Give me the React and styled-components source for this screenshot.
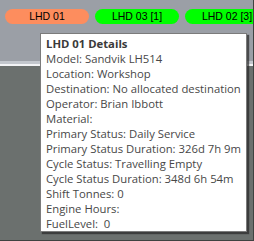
import React from 'react';
import styled, { createGlobalStyle } from 'styled-components';

const GlobalStyle = createGlobalStyle`
  html, body {
    margin: 0;
    padding: 0;
    background: #6b706e;
  }
`;

const Frame = styled.div`
  position: relative;
  width: 254px;
  height: 241px;
  box-sizing: border-box;
  border-right: 1px solid #3f4241;
  border-bottom: 1px solid #3f4241;
  background: #6b706e;
  overflow: hidden;
  display: flex;
  flex-direction: column;
`;

const TopBand = styled.div`
  height: 64px;
  background: #9b9fa6;
  padding: 9px 0 0 5px;
  box-sizing: border-box;
  border-bottom: 3px solid #c3c7cd;
`;

const WhiteLine = styled.div`
  height: 2px;
  background: #f2f3f5;
`;

const PillRow = styled.div`
  display: flex;
  gap: 6px;
  white-space: nowrap;
`;

const Pill = styled.div`
  flex: none;
  width: 84px;
  height: 15px;
  border-radius: 8px;
  background: ${p => p.$color};
  font-family: "Liberation Sans", Arial, sans-serif;
  font-size: 10.5px;
  line-height: 15px;
  text-align: center;
  color: #000;
`;

const Tooltip = styled.div`
  position: absolute;
  left: 40px;
  top: 33px;
  width: 207px;
  height: 199px;
  box-sizing: border-box;
  background: #fff;
  border: 1px solid #7b7b7b;
  box-shadow: 2px 2px 1px rgba(40, 40, 40, 0.7);
  padding: 2px 0 0 5px;
  font-family: "Open Sans", "Noto Sans", sans-serif;
  font-size: 11.3px;
  line-height: 15px;
  color: #474747;
  white-space: nowrap;
`;

const Title = styled.div`
  font-weight: bold;
  color: #3a3a3a;
`;

const Line = styled.div``;

const details = [
  'Model: Sandvik LH514',
  'Location: Workshop',
  'Destination: No allocated destination',
  'Operator: Brian Ibbott',
  'Material:',
  'Primary Status: Daily Service',
  'Primary Status Duration: 326d 7h 9m',
  'Cycle Status: Travelling Empty',
  'Cycle Status Duration: 348d 6h 54m',
  'Shift Tonnes: 0',
  'Engine Hours:',
  'FuelLevel:  0',
];

export default function App() {
  return (
    <>
      <GlobalStyle />
      <Frame>
        <TopBand>
          <PillRow>
            <Pill $color="#fd8d5e">LHD 01</Pill>
            <Pill $color="#00ff00">LHD 03 [1]</Pill>
            <Pill $color="#00ff00">LHD 02 [3]</Pill>
          </PillRow>
        </TopBand>
        <WhiteLine />
        <Tooltip>
          <Title>LHD 01 Details</Title>
          {details.map(d => (
            <Line key={d}>{d.replace('  ', '\u00a0 ')}</Line>
          ))}
        </Tooltip>
      </Frame>
    </>
  );
}
